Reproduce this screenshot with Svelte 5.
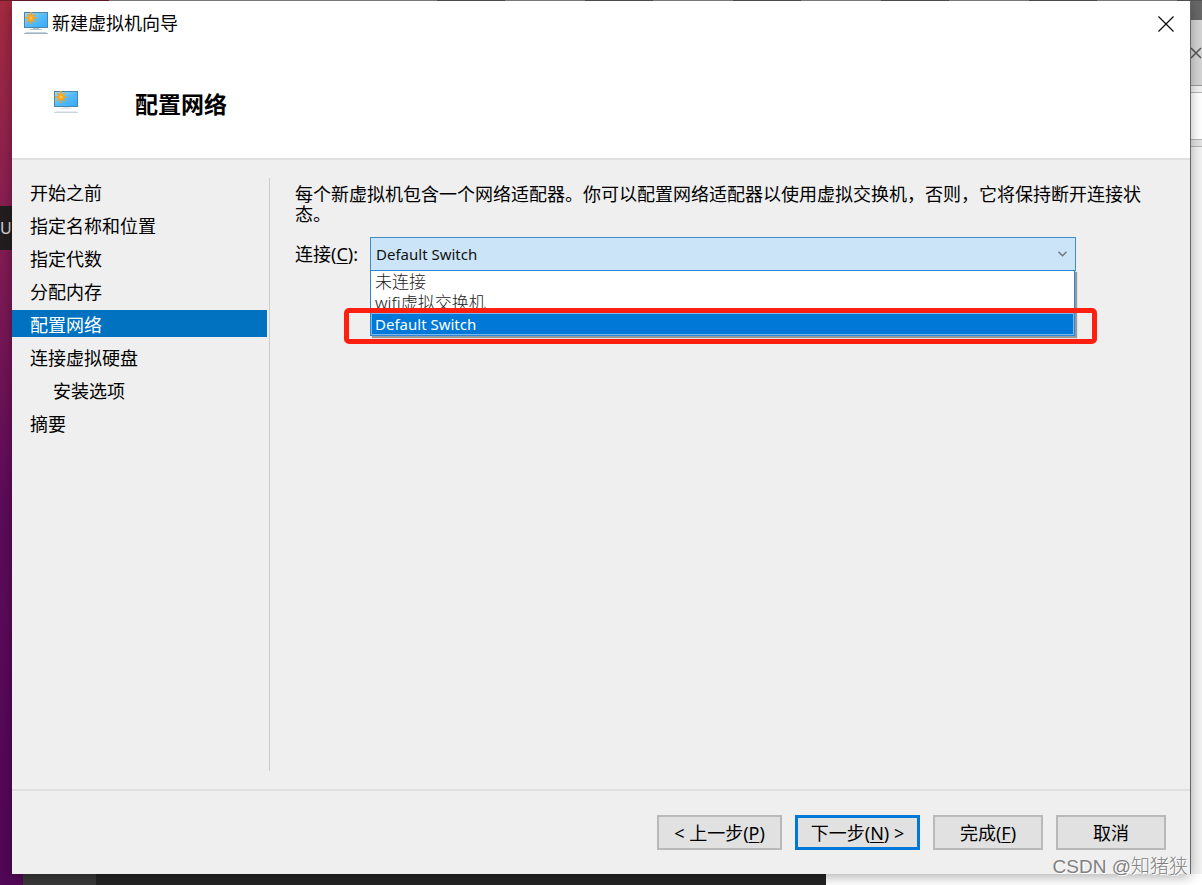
<script lang="ts">
  type Step = { id: string; label: string; nested?: boolean };

  const steps: Step[] = [
    { id: 'before', label: '开始之前' },
    { id: 'name', label: '指定名称和位置' },
    { id: 'generation', label: '指定代数' },
    { id: 'memory', label: '分配内存' },
    { id: 'network', label: '配置网络' },
    { id: 'disk', label: '连接虚拟硬盘' },
    { id: 'install', label: '安装选项', nested: true },
    { id: 'summary', label: '摘要' },
  ];

  const switches = ['未连接', 'wifi虚拟交换机', 'Default Switch'];

  let current = $state('network');
  let connection = $state('Default Switch');
</script>

{#snippet monitor()}
  <svg class="monitor" viewBox="0 0 24 23" aria-hidden="true">
    <defs>
      <linearGradient id="screen" x1="0" y1="0" x2="1" y2="1">
        <stop offset="0" stop-color="#a5d8f3" />
        <stop offset="0.5" stop-color="#55bbf9" />
        <stop offset="1" stop-color="#35aaff" />
      </linearGradient>
    </defs>
    <rect width="24" height="16" fill="#4a86ab" />
    <rect x="1" y="1" width="22" height="14" fill="url(#screen)" />
    <path d="M7 0v12M1 6h12M3 2l8 8M11 2l-8 8" stroke="#f0a020" stroke-width="1.6" />
    <circle cx="7" cy="6" r="3.2" fill="#f7a823" />
    <circle cx="7" cy="6" r="1.4" fill="#ffc45a" />
    <path class="stand" d="M9 16h6v1h3v1H6v-1h3z" fill="#b4c3cc" />
    <path class="base" d="M2 20h20l2 2H0z" fill="#c3d0da" />
    <path class="base" d="M0 21.500h24" stroke="#9fb2c2" />
  </svg>
{/snippet}

<div class="desktop">
  <div class="strip-top"></div>

  <div class="strip-left"><span class="launcher">U</span></div>

  <main class="window">
    <header class="titlebar">
      {@render monitor()}
      <span class="title">新建虚拟机向导</span>
      <button class="close" aria-label="关闭">
        <svg viewBox="0 0 16 16" aria-hidden="true">
          <path d="M0.500 0.500l15 15M15.500 0.500l-15 15" stroke="#000" stroke-width="1.100" />
        </svg>
      </button>
    </header>

    <div class="banner">
      {@render monitor()}
      <h1>配置网络</h1>
    </div>

    <div class="content">
      <nav class="steps">
        {#each steps as step (step.id)}
          <button
            class="step"
            class:nested={step.nested}
            class:active={current === step.id}
            onclick={() => (current = step.id)}
          >
            {step.label}
          </button>
        {/each}
      </nav>

      <section class="page">
        <p>每个新虚拟机包含一个网络适配器。你可以配置网络适配器以使用虚拟交换机，否则，它将保持断开连接状态。</p>

        <div class="field">
          <label for="connection">连接(<u>C</u>):</label>
          <div class="combo">
            <select id="connection" bind:value={connection}>
              {#each switches as name}
                <option value={name}>{name}</option>
              {/each}
            </select>
            <svg class="chevron" viewBox="0 0 9 6" aria-hidden="true">
              <path d="M0.500 0.800l4 4 4-4" fill="none" stroke="#6d7780" stroke-width="1.400" />
            </svg>
            <ul class="dropdown">
              {#each switches as name}
                <li class:selected={connection === name}>{name}</li>
              {/each}
            </ul>
            <div class="marker"></div>
          </div>
        </div>
      </section>
    </div>

    <footer class="actions">
      <button class="wide">&lt; 上一步(<u>P</u>)</button>
      <button class="wide primary">下一步(<u>N</u>) &gt;</button>
      <button>完成(<u>F</u>)</button>
      <button>取消</button>
    </footer>
  </main>

  <div class="strip-right">
    <div class="tab">
      <svg viewBox="0 0 12 12" aria-hidden="true">
        <path d="M1 1l10 10M11 1l-10 10" stroke="#555" stroke-width="1.500" />
      </svg>
    </div>
    <div class="toolbar"></div>
  </div>

  <div class="strip-bottom">
    <div class="dock"></div>
    <div class="panel"></div>
    <div class="terminal"></div>
    <div class="paper"></div>
  </div>

  <span class="watermark">CSDN @知猪狭</span>
</div>

<style>
  :global(body) {
    margin: 0;
  }

  .desktop {
    position: relative;
    display: grid;
    grid-template-columns: 12px minmax(0, 1fr) 12px;
    grid-template-rows: 1px minmax(0, 1fr) 11px;
    min-height: 100vh;
    overflow: hidden;
    color: #000;
    font-family: 'Noto Sans', 'Noto Sans CJK SC', sans-serif;
    font-size: 18px;
  }

  button {
    padding: 0;
    border: 0;
    background: none;
    color: inherit;
    font: inherit;
  }

  u {
    text-underline-offset: 2px;
    text-decoration-thickness: 1px;
  }

  /* Desktop behind the dialog */
  .strip-top {
    grid-column: 1 / -1;
    background: linear-gradient(to right, #6c1b2a 109px, #8a8a8a 109px 437px, transparent 437px),
      repeating-linear-gradient(to right, #555 0 68px, #8a8a8a 68px 148px) -7px 0;
  }

  .strip-left {
    padding-top: 205px;
    background: linear-gradient(#a52a40, #8a1f52 200px, #5e0b5a 500px, #520757);
  }

  .launcher {
    display: block;
    height: 44px;
    background: #231d20;
    color: #d8d8d8;
    font-size: 16px;
    line-height: 44px;
  }

  .strip-right {
    background: #f2f2f2;
  }

  .tab {
    display: flex;
    align-items: center;
    box-sizing: border-box;
    height: 85px;
    padding-top: 20px;
    border-bottom: 1px solid #999;
    background: linear-gradient(#686868 19px, #d4d4d4 19px);
  }

  .tab svg {
    width: 12px;
    height: 12px;
  }

  .toolbar {
    height: 46px;
    margin-top: 6px;
    border: solid #b5b5b5;
    border-width: 1px 0;
    background: #fff;
    box-shadow: 0 6px #e4e4e4, 0 7px #b5b5b5;
  }

  .strip-bottom {
    grid-column: 1 / -1;
    display: grid;
    grid-template-columns: 23px 73px minmax(0, 730fr) minmax(0, 376fr);
  }

  .dock {
    background: #520757;
  }

  .panel {
    background: #383838;
  }

  .terminal {
    background: #232323;
  }

  .paper {
    background: #fff;
  }

  /* Dialog */
  .window {
    position: relative;
    z-index: 1;
    display: flex;
    flex-direction: column;
    background: #efefef;
    box-shadow: 1px 0 #666, 0 2px 12px rgba(0, 0, 0, 0.35);
  }

  .monitor {
    flex: none;
    width: 24px;
    height: 23px;
  }

  .titlebar {
    display: flex;
    align-items: center;
    height: 45px;
    padding: 0 16px 0 12px;
    background: #fff;
  }

  .title {
    flex: 1;
    margin-left: 4px;
    padding-bottom: 3px;
  }

  .close {
    display: flex;
  }

  .close svg {
    width: 16px;
    height: 16px;
  }

  .banner {
    display: flex;
    align-items: center;
    gap: 57px;
    height: 112px;
    padding-left: 42px;
    border-bottom: 2px solid #e0e0e0;
    background: #fff;
  }

  .banner .stand,
  .banner .base {
    opacity: 0.4;
  }

  h1 {
    margin: 0;
    padding-top: 4px;
    font-size: 23px;
    line-height: 28px;
  }

  .content {
    flex: 1;
    display: flex;
    padding: 18px 0;
  }

  .steps {
    display: flex;
    flex-direction: column;
    flex: none;
    gap: 6px;
    width: 255px;
    padding-right: 2px;
    border-right: 1px solid #cdcdcd;
  }

  .step {
    box-sizing: border-box;
    height: 27px;
    padding: 4px 0 0 18px;
    line-height: 23px;
    text-align: left;
  }

  .step.nested {
    padding-left: 41px;
  }

  .step.active {
    background: #0072c0;
    color: #fff;
  }

  .page {
    flex: 1;
    min-width: 0;
    padding: 6px 40px 0 25px;
  }

  .page p {
    margin: 0;
    line-height: 20px;
  }

  .field {
    display: flex;
    align-items: center;
    margin: 13px 74px 0 0;
  }

  .field label {
    flex: none;
    width: 75px;
    padding-bottom: 2px;
  }

  .combo {
    position: relative;
    flex: 1;
  }

  select {
    display: block;
    width: 100%;
    height: 34px;
    padding: 0 30px 0 5px;
    border: 1px solid #3c8dcb;
    border-radius: 0;
    outline: 0;
    appearance: none;
    background: #cce4f7;
    color: #111;
    font-family: inherit;
    font-size: 15px;
  }

  .chevron {
    position: absolute;
    top: 14px;
    right: 9px;
    width: 9px;
    height: 6px;
    pointer-events: none;
  }

  .dropdown {
    position: absolute;
    top: 33px;
    right: 1px;
    left: 0;
    margin: 0;
    padding: 0;
    border: 1px solid #2a86d6;
    background: #fff;
    box-shadow: 2px 2px 1px #999;
    list-style: none;
  }

  .dropdown li {
    height: 21px;
    padding-left: 4px;
    overflow: hidden;
    color: #222;
    font-size: 17px;
    font-weight: 300;
    line-height: 21px;
  }

  .dropdown li.selected {
    height: 20px;
    border: 1px solid #7ab8ee;
    padding-left: 3px;
    background: #0078d7;
    color: #fff;
    font-size: 15px;
    font-weight: 400;
    line-height: 20px;
  }

  /* Red callout round the chosen switch */
  .marker {
    position: absolute;
    top: 71px;
    right: -21px;
    left: -26px;
    height: 26px;
    border: 5px solid #ff1f10;
    border-radius: 5px;
    pointer-events: none;
  }

  .actions {
    display: flex;
    justify-content: flex-end;
    gap: 13px;
    padding: 24px 24px 24px 0;
    border-top: 2px solid #e0e0e0;
  }

  .actions button {
    box-sizing: border-box;
    width: 110px;
    height: 35px;
    border: 2px solid #b9b9b9;
    background: #e1e1e1;
    line-height: 30px;
    white-space: nowrap;
  }

  .actions .wide {
    width: 125px;
  }

  .actions .primary {
    border: 3px solid #0078d7;
  }

  .watermark {
    position: absolute;
    right: 14px;
    bottom: 4px;
    z-index: 2;
    color: #808080;
    font-family: 'Liberation Sans', 'Noto Sans CJK SC', sans-serif;
    font-size: 19px;
    font-weight: 300;
    line-height: 28px;
    text-shadow: 1px 1px #fff;
  }
</style>
